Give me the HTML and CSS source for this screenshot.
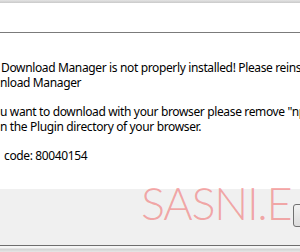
FILE: index.html
```
<!DOCTYPE html>
<html lang="en">
<head>
    <meta charset="UTF-8">
    <title>Download Manager</title>
    <link rel="stylesheet" href="styles.css">
</head>
<body>
    <div class="window">
        <div class="window-edge"></div>
        <div class="window-header"></div>
        <div class="message">
            <p class="line first">Download Manager is not properly installed! Please reinstall</p>
            <p class="line">nload Manager</p>
            <p class="line gap">u want to download with your browser please remove "npIDMPlugin.dll"</p>
            <p class="line">n the Plugin directory of your browser.</p>
            <p class="line gap">code: 80040154</p>
        </div>
        <div class="footer">
            <button class="ok-button">OK</button>
        </div>
        <div class="window-bottom"></div>
        <div class="watermark">SASNI.E</div>
    </div>
</body>
</html>
```

FILE: styles.css
```
body, html {
    margin: 0;
    background-color: #fff;
    font-family: "Noto Sans", "Open Sans", sans-serif;
    color: #000;
}
.window {
    width: 300px;
    height: 252px;
    overflow: hidden;
    position: relative;
}
.window-edge {
    height: 3px;
    background: linear-gradient(#e4e4e4, #c9c9c9);
}
.window-header {
    height: 29px;
    border-bottom: 1px solid #7b7b7b;
}
.message {
    height: 156px;
    padding-top: 27px;
    box-sizing: border-box;
}
.line {
    margin: 0;
    font-size: 12px;
    line-height: 15px;
    letter-spacing: -0.36px;
    white-space: nowrap;
    overflow: hidden;
}
.line.first {
    padding-left: 1px;
}
.line.gap {
    margin-top: 14px;
}
.line.gap:last-child {
    padding-left: 4px;
}
.footer {
    height: 56px;
    background-color: #f0f0f0;
    padding: 14px 0 0 293px;
    box-sizing: border-box;
}
.ok-button {
    width: 75px;
    height: 23px;
    border: 1px solid #707070;
    border-radius: 3px;
    background: linear-gradient(#f2f2f2, #dcdcdc);
    font-family: inherit;
    font-size: 12px;
}
.window-bottom {
    border-top: 1px solid #6e6e6e;
    height: 6px;
    background: linear-gradient(#f6f6f6 0, #f6f6f6 2px, #d2d2d2 3px, #e6e6e6);
}
.watermark {
    position: absolute;
    left: 141px;
    top: 176px;
    font-family: Lato, "Open Sans", sans-serif;
    font-weight: 300;
    font-size: 45px;
    letter-spacing: -1.3px;
    color: rgba(240, 60, 60, 0.42);
    white-space: nowrap;
}
```
